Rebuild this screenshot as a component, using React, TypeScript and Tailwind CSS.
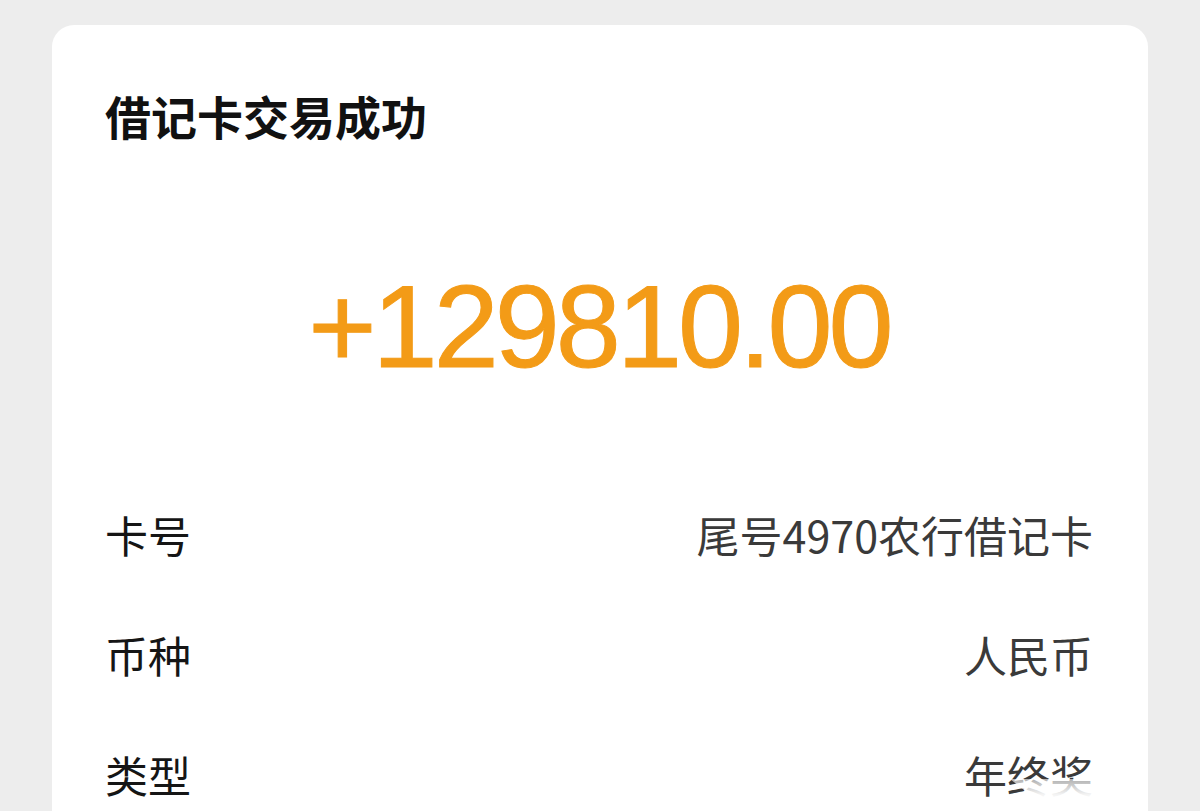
import React from "react";

const cjk = "font-['PingFang_SC','Noto_Sans_CJK_SC',sans-serif]";

function Row({ label, value }: { label: string; value: string }) {
  return (
    <div className="flex h-[120px] items-center justify-between">
      <span className={`${cjk} text-[43px] leading-[43px] text-[#151515]`}>{label}</span>
      <span className={`${cjk} text-[43px] leading-[43px] text-[#3a3a3a]`}>{value}</span>
    </div>
  );
}

export default function App() {
  return (
    <div className="relative h-[811px] w-[1200px] overflow-hidden bg-[#ededed] px-[52px] pt-[25px]">
      <div className="h-[900px] rounded-[22px] bg-white pl-[53px] pr-[55px] pt-[66px]">
        <h1 className={`${cjk} text-[46px] font-bold leading-[48px] text-[#111]`}>借记卡交易成功</h1>
        <div className="mt-[129px] text-center font-['Liberation_Sans',Arial,sans-serif] text-[117px] leading-[118px] tracking-[-4px] text-[#f39b17] [-webkit-text-stroke:1px_#f39b17]">
          +129810.00
        </div>
        <div className="mt-[88px] flex flex-col">
          <Row label="卡号" value="尾号4970农行借记卡" />
          <Row label="币种" value="人民币" />
          <Row label="类型" value="年终奖" />
        </div>
      </div>
      <div className="absolute left-[1010px] top-[779px] h-[32px] w-[138px] bg-gradient-to-b from-white/60 via-white/95 to-white [clip-path:polygon(0_0,100%_0,100%_100%,30%_100%)]" />
    </div>
  );
}
